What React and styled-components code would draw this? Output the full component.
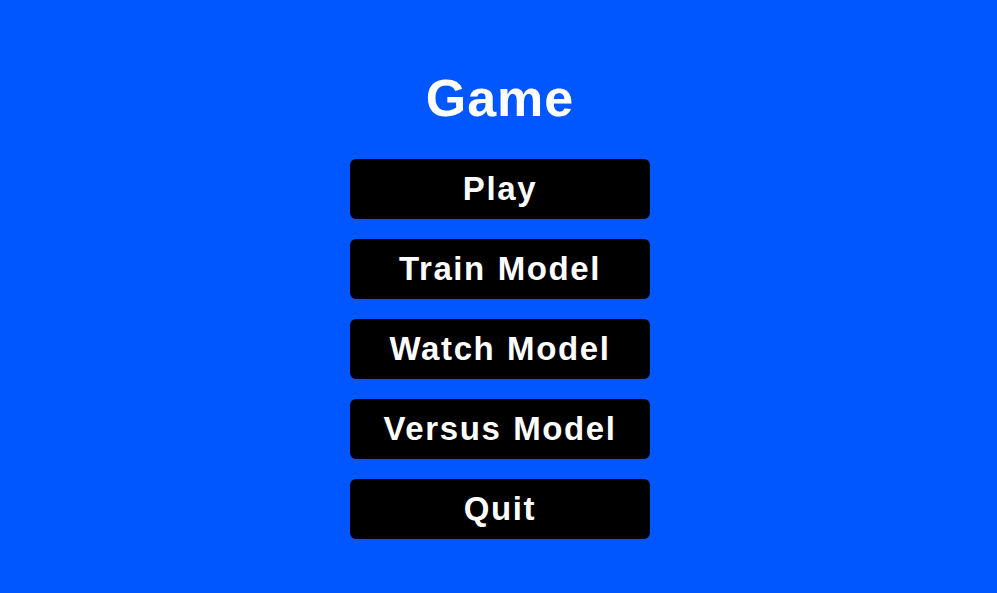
import React from 'react';
import styled, { createGlobalStyle } from 'styled-components';

const GlobalStyle = createGlobalStyle`
    html, body {
        margin: 0;
        padding: 0;
        background: #0057ff;
    }
    body {
        font-family: "Liberation Sans", Arial, sans-serif;
    }
`

const Screen = styled.div`
    width: 100%;
    height: 593px;
    background: #0057ff;
    display: flex;
    flex-direction: column;
    align-items: center;
    padding-top: 68px;
    padding-left: 3px;
    box-sizing: border-box;
`

const Title = styled.h1`
    margin: 0 0 31px 0;
    height: 60px;
    line-height: 60px;
    font-size: 52px;
    font-weight: 700;
    letter-spacing: 1px;
    color: #ffffff;
`

const Menu = styled.div`
    display: flex;
    flex-direction: column;
    gap: 20px;
`

const MenuButton = styled.button`
    width: 300px;
    height: 60px;
    border: none;
    border-radius: 6px;
    background: #000000;
    color: #ffffff;
    font-family: "Liberation Sans", Arial, sans-serif;
    font-size: 33px;
    font-weight: 700;
    letter-spacing: 1.6px;
    word-spacing: 1px;
    cursor: pointer;
    padding: 0;
`

const items = ['Play', 'Train Model', 'Watch Model', 'Versus Model', 'Quit'];

const App = () => {
    return (
        <>
            <GlobalStyle />
            <Screen>
                <Title>Game</Title>
                <Menu>
                    {items.map(label => (
                        <MenuButton key={label}>{label}</MenuButton>
                    ))}
                </Menu>
            </Screen>
        </>
    )
};

export default App;
